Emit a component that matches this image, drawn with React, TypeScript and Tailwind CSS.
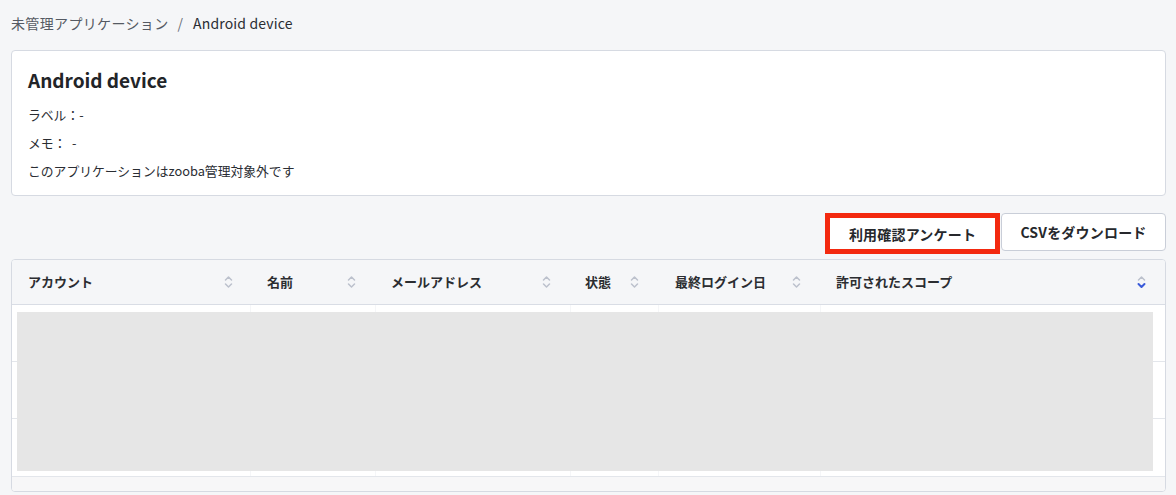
import React from "react";

const font = { fontFamily: '"Noto Sans CJK JP", "Noto Sans", sans-serif' };

function SortIcon({ active }: { active?: boolean }) {
  return (
    <svg width="9" height="14" viewBox="0 0 9 14" fill="none">
      <path d="M1.5 5 L4.5 2 L7.5 5" stroke="#bcc1cc" strokeWidth="1.5" strokeLinecap="round" strokeLinejoin="round" />
      <path d="M1.5 9 L4.5 12 L7.5 9" stroke={active ? "#3a5ad9" : "#bcc1cc"} strokeWidth={active ? "2" : "1.5"} strokeLinecap="round" strokeLinejoin="round" />
    </svg>
  );
}

const cols = [
  { label: "アカウント" },
  { label: "名前" },
  { label: "メールアドレス" },
  { label: "状態" },
  { label: "最終ログイン日" },
  { label: "許可されたスコープ", active: true },
];

export default function App() {
  return (
    <div className="w-[1176px] h-[495px] bg-[#f5f6f8] pl-[11px] pr-[10px] overflow-hidden" style={font}>
      <div className="h-[50px] pt-[13px] text-[14px] leading-[20px] flex items-start">
        <span className="text-[#555a63] tracking-[0.35px]">未管理アプリケーション</span>
        <span className="text-[#6b7079] ml-[9px] mr-[10px]">/</span>
        <span className="text-[#2a2d33] tracking-[0.15px]">Android device</span>
      </div>

      <div className="bg-white border border-[#d6dae2] rounded-[4px] h-[146px] pt-[15px] pl-[16px] pb-[10px]">
        <div className="text-[19px] leading-[28px] font-bold text-[#222428]">Android device</div>
        <div className="mt-[7px] text-[12.8px] leading-[28px] text-[#2a2d33]">
          <div>ラベル：-</div>
          <div>メモ：&nbsp;&nbsp;-</div>
          <div>このアプリケーションはzooba管理対象外です</div>
        </div>
      </div>

      <div className="mt-[17px] flex justify-end items-start gap-[1px]">
        <button className="w-[175px] h-[41px] bg-white border-[5px] border-[#f3290f] text-[14px] font-bold text-[#26282c] pt-[1px] tracking-[0.2px]">
          利用確認アンケート
        </button>
        <button className="w-[165px] h-[38px] bg-white border border-[#c9ced8] rounded-[4px] text-[14px] font-bold text-[#26282c] tracking-[0.2px]">
          CSVをダウンロード
        </button>
      </div>

      <div className="mt-[5px] border border-[#d6dae2] rounded-[4px] bg-white overflow-hidden">
        <div className="grid grid-cols-[238px_125px_195px_88px_162px_1fr] h-[45px] bg-[#f5f6f8] border-b border-[#d9dde5]">
          {cols.map((c, i) => (
            <div key={i} className={`flex items-center justify-between ${i === 3 ? "pl-[15px]" : i === 1 || i === 4 ? "pl-[17px]" : "pl-[16px]"} ${i === 0 ? "pr-[17px]" : "pr-[19px]"}`}>
              <span className="text-[13px] font-bold text-[#2b2d31]">{c.label}</span>
              <SortIcon active={c.active} />
            </div>
          ))}
        </div>
        <div className="relative">
          {[0, 1, 2].map((r) => (
            <div key={r} className={`grid grid-cols-[238px_125px_195px_88px_162px_1fr] h-[57px] ${r < 2 ? "border-b border-[#e3e6eb]" : ""}`}>
              {cols.map((_, i) => (
                <div key={i} className={i > 0 ? "border-l border-[#f5f6f8]" : ""} />
              ))}
            </div>
          ))}
          <div className="absolute left-[5px] top-[7px] w-[1136px] h-[159px] bg-[#e6e6e6]" />
        </div>
        <div className="h-[15px] bg-[#f7f7f8] border-t border-[#e3e6eb]" />
      </div>
    </div>
  );
}
